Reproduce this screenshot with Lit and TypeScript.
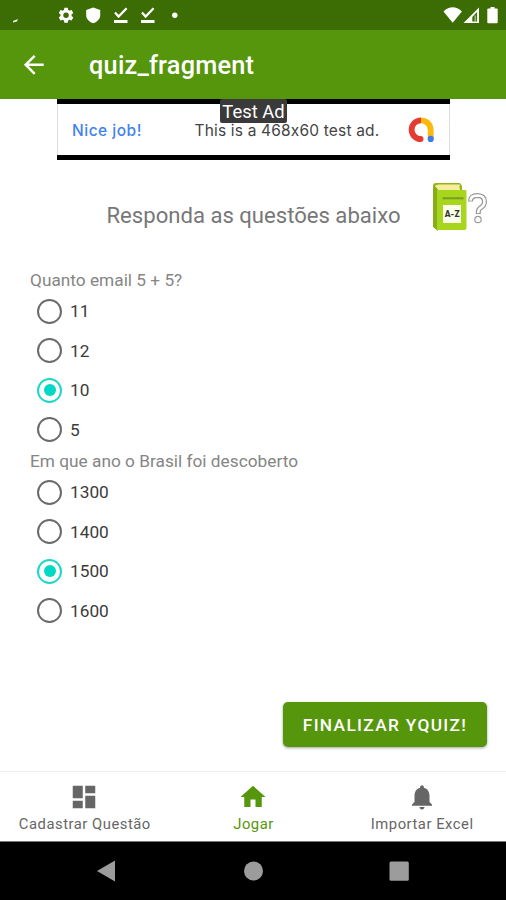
import { LitElement, html, css, svg } from "lit";
import { customElement, property } from "lit/decorators.js";

@customElement("quiz-question")
class QuizQuestion extends LitElement {
  @property() label = "";
  @property({ type: Array }) options: string[] = [];
  @property() selected = "";

  static styles = css`
    :host { display: block; }
    .label { height: 23.4px; line-height: 24.6px; font-size: 17.25px; color: #858585; white-space: nowrap; letter-spacing: 0.01px; }
    .option { display: flex; align-items: center; height: 39.4px; color: #3b3b3b; font-size: 17.25px; }
    .ring { box-sizing: border-box; width: 25px; height: 25px; margin: 0 8px 0 7px; border: 2.5px solid #6b6b6b; border-radius: 50%; display: grid; place-items: center; flex: none; }
    .on { border-color: #1bd9c5; }
    .on::after { content: ""; width: 12px; height: 12px; border-radius: 50%; background: #03d8c4; }
  `;

  render() {
    return html`
      <div class="label">${this.label}</div>
      ${this.options.map(
        (o) => html`<div class="option"><span class="ring ${o === this.selected ? "on" : ""}"></span><span>${o}</span></div>`
      )}
    `;
  }
}

const settings = svg`<path d="M19.14 12.94c.04-.3.06-.61.06-.94s-.02-.64-.07-.94l2.03-1.58a.49.49 0 0 0 .12-.61l-1.92-3.32a.49.49 0 0 0-.59-.22l-2.39.96c-.5-.38-1.03-.7-1.62-.94L14.4 2.81a.48.48 0 0 0-.48-.41h-3.84c-.24 0-.43.17-.47.41l-.36 2.54c-.59.24-1.13.57-1.62.94l-2.39-.96c-.22-.08-.47 0-.59.22L2.74 8.87c-.12.21-.08.47.12.61l2.03 1.58c-.05.3-.09.63-.09.94s.02.64.07.94l-2.03 1.58a.49.49 0 0 0-.12.61l1.92 3.32c.12.22.37.29.59.22l2.39-.96c.5.38 1.03.7 1.62.94l.36 2.54c.05.24.24.41.48.41h3.84c.24 0 .44-.17.47-.41l.36-2.54c.59-.24 1.13-.56 1.62-.94l2.39.96c.22.08.47 0 .59-.22l1.92-3.32a.49.49 0 0 0-.12-.61zM12 15.6a3.6 3.6 0 1 1 0-7.2 3.6 3.6 0 0 1 0 7.2z"/>`;

@customElement("app-root")
class AppRoot extends LitElement {
  static styles = css`
    :host { display: flex; flex-direction: column; width: 506px; height: 900px; background: #fff; font-family: Roboto, "Liberation Sans", sans-serif; overflow: hidden; }
    svg { display: block; flex: none; }
    .status { height: 30px; background: #3c6c04; flex: none; }
    .bar { height: 68.6px; background: #55960c; color: #fff; display: flex; align-items: center; flex: none; padding-left: 19px; }
    .title { margin: 3px 0 0 40.5px; font-size: 25.3px; font-weight: 500; line-height: 32px; letter-spacing: .2px; }
    .ad { position: relative; box-sizing: border-box; width: 393px; height: 61.8px; margin-left: 57px; border: solid #000; border-width: 5px 0 5px; display: flex; align-items: center; flex: none; font-family: Inter, sans-serif; font-size: 15.5px; color: #444; padding: 2px 15px 0; box-shadow: inset 1px 0 #ddd, inset -1px 0 #ddd; font-feature-settings: "calt" 0; }
    .nice { color: #3f82f0; font-weight: 500; width: 123px; white-space: nowrap; letter-spacing: .5px; }
    .copy { width: 213.500px; white-space: nowrap; letter-spacing: .18px; }
    .tag { position: absolute; left: 163px; top: -4.600px; width: 67px; height: 24px; border-radius: 2px; background: #3a3a3a; color: #fff; font: 18.4px/26px Roboto, sans-serif; text-align: center; white-space: nowrap; }
    .intro { display: flex; align-items: flex-start; height: 108px; padding-left: 106.5px; flex: none; }
    .heading { margin-top: 40px; width: 321.5px; font-size: 22.1px; line-height: 30px; color: #777; white-space: nowrap; }
    .book { margin-top: 18.600px; }
    .quiz { padding-left: 30px; flex: 1; }
    .actions { display: flex; justify-content: flex-end; padding: 0 19px 24px 0; }
    button { width: 204px; height: 45px; border: 0; padding: 1px 0 0; border-radius: 5px; background: #55960c; color: #fff; font: 500 17.25px Roboto, sans-serif; letter-spacing: 1.35px; white-space: nowrap; box-shadow: 0 1px 3px rgba(0,0,0,.38); }
    .tabs { box-sizing: border-box; height: 71px; border-top: 1px solid #eee; border-bottom: 1px solid #777; display: grid; grid-template-columns: repeat(3, 1fr); flex: none; }
    .tab { display: flex; flex-direction: column; align-items: center; color: #666; font-size: 14.8px; letter-spacing: .52px; padding-top: 10px; }
    .tab span { line-height: 20px; margin: 2px 0 0 1px; white-space: nowrap; }
    .tab.active { color: #55960c; }
    .system { height: 58px; background: #000; flex: none; }
  `;

  render() {
    return html`
      <div class="status">
        <svg width="506" height="30" fill="#fff">
          <path d="M13 21l5-2-1 2.500-4 1z" opacity=".9"/>
          <g transform="translate(56.8 6) scale(.77)">${settings}</g>
          <path d="M93.2 7.4l7 2.5v5.3c0 3.8-2.8 6.5-7 8-4.2-1.5-7-4.2-7-8V9.900z"/>
          ${[0, 27].map((x) => svg`<g transform="translate(${x} 0)"><path d="M115 12.500l3.600 4 8-8.200" fill="none" stroke="#fff" stroke-width="2.300"/><path d="M114 20h13.500v3H114z"/></g>`)}
          <circle cx="174.800" cy="15.300" r="2.700"/>
          <path d="M443.500 11.500q9.200-8.400 18.400 0L452.700 22.700z"/>
          <path fill-rule="evenodd" d="M463.500 23L479 7.500V23zM472.300 16.900v4.600h4.800v-9.400z"/>
          <path d="M474.500 15.500h1.600v6h-1.600z" opacity=".5"/>
          <path d="M490.500 7h4v1.400h2.300q.9 0 .9.900v12.900q0 1-.9 1h-8.600q-.9 0-.9-1V9.300q0-.9.900-.9h2.300z"/>
        </svg>
      </div>
      <div class="bar">
        <svg width="29.600" height="29.600" viewBox="0 0 24 24" fill="#fff"><path d="M20 11H7.830l5.590-5.590L12 4l-8 8 8 8 1.410-1.410L7.830 13H20z"/></svg>
        <div class="title">quiz_fragment</div>
      </div>
      <div class="ad">
        <div class="nice">Nice job!</div>
        <div class="copy">This is a 468x60 test ad.</div>
        <svg width="28" height="28" fill="none" stroke-width="5.800">
          <path d="M14 4.300a9.700 9.700 0 0 1 9.700 9.700v8.500" stroke="#fbb90b"/>
          <path d="M14 4.300a9.400 9.400 0 1 0 0 18.800" stroke="#e63b31"/>
          <circle cx="13.600" cy="22.900" r="2.900" fill="#e63b31"/>
          <circle cx="23.700" cy="22.900" r="3.100" fill="#3d7be8"/>
        </svg>
        <div class="tag">Test Ad</div>
      </div>
      <div class="intro">
        <div class="heading">Responda as questões abaixo</div>
        <svg class="book" width="64" height="58">
          <path d="M5 7q0-3 3-3h24q2 2 2 4v6H10z" fill="#93b51b"/>
          <path d="M7 7q1-1.500 4-1.500h21q-1 2 0 4.500v3H12z" fill="#f5ed9b"/>
          <path d="M5 7l5 4v41l-5-4z" fill="#87ae19"/>
          <path d="M9 11h28q1.500 0 1.500 1v37q0 2-2 2H9z" fill="#a8d51d"/>
          <path d="M14.500 19.300h21" stroke="#789d24" stroke-width="2"/>
          <rect x="15" y="26" width="18" height="18" fill="#fcffe9"/>
          <text x="24.200" y="38.200" text-anchor="middle" font-family="Roboto" font-weight="900" font-size="8.500" fill="#333">A-Z</text>
          <path d="M42.500 22.500q0-6 7-6 7 .2 7 6.300 0 4-4.200 6.200-2 1.300-2 4v2" fill="none" stroke="#999" stroke-width="5"/>
          <path d="M42.500 21.600q.2-5.100 7-5.100 7 .2 7 6.300 0 4-4.200 6.200-2 1.300-2 4v1" fill="none" stroke="#fff" stroke-width="2.600"/>
          <circle cx="50" cy="40.500" r="3.200" fill="#fff" stroke="#999" stroke-width="1.200"/>
        </svg>
      </div>
      <div class="quiz">
        <quiz-question label="Quanto email 5 + 5?" .options=${["11", "12", "10", "5"]} selected="10"></quiz-question>
        <quiz-question label="Em que ano o Brasil foi descoberto" .options=${["1300", "1400", "1500", "1600"]} selected="1500"></quiz-question>
      </div>
      <div class="actions"><button>FINALIZAR YQUIZ!</button></div>
      <div class="tabs">
        <div class="tab">
          <svg width="30" height="30" viewBox="0 0 24 24" fill="#666"><path d="M3 13h8V3H3v10zm0 8h8v-6H3v6zm10 0h8V11h-8v10zm0-18v6h8V3h-8z"/></svg>
          <span>Cadastrar Questão</span>
        </div>
        <div class="tab active">
          <svg width="30" height="30" viewBox="0 0 24 24" fill="#55960c"><path d="M10 20v-6h4v6h5v-8h3L12 3 2 12h3v8z"/></svg>
          <span>Jogar</span>
        </div>
        <div class="tab">
          <svg width="30" height="30" viewBox="0 0 24 24" fill="#666"><path d="M12 22c1.100 0 2-.9 2-2h-4c0 1.100.89 2 2 2zm6-6v-5c0-3.070-1.640-5.640-4.500-6.320V4c0-.83-.67-1.500-1.500-1.500s-1.500.67-1.500 1.500v.68C7.630 5.360 6 7.920 6 11v5l-2 2v1h16v-1l-2-2z"/></svg>
          <span>Importar Excel</span>
        </div>
      </div>
      <div class="system">
        <svg width="506" height="58" fill="#9c9c9c">
          <path d="M97 29l18-10.500v21z"/>
          <circle cx="253.500" cy="29" r="9.500"/>
          <rect x="389.500" y="19.500" width="19.300" height="19.300" rx="1.500"/>
        </svg>
      </div>
    `;
  }
}
